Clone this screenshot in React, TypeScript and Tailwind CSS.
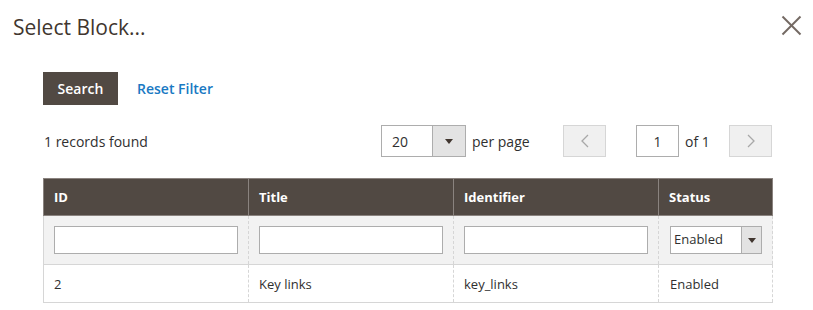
import React from "react";

const Caret = () => (
  <svg width="8" height="5" viewBox="0 0 8 5" className="block">
    <polygon points="0,0 8,0 4,5" fill="#41362f" />
  </svg>
);

export default function App() {
  return (
    <div className="w-[813px] h-[310px] bg-white font-['Open_Sans',sans-serif] text-[#303030] overflow-hidden">
      <div className="flex items-start justify-between pl-[13px] pr-[11px] pt-[12px]">
        <h1 className="text-[21px] leading-[30px] text-[#41362f] font-normal">Select Block...</h1>
        <button className="mt-[3px] w-[21px] h-[21px] flex items-center justify-center">
          <svg width="21" height="21" viewBox="0 0 21 21">
            <line x1="1.5" y1="1.5" x2="19.5" y2="19.5" stroke="#736963" strokeWidth="2" />
            <line x1="19.5" y1="1.5" x2="1.5" y2="19.5" stroke="#736963" strokeWidth="2" />
          </svg>
        </button>
      </div>

      <div className="pl-[43px] pr-[40px]">
        <div className="flex items-center gap-[19px] mt-[30px]">
          <button className="h-[33px] w-[75px] bg-[#514943] text-white text-[14px] font-semibold flex items-center justify-center">
            Search
          </button>
          <a className="text-[14px] font-semibold text-[#1979c3] cursor-pointer">Reset Filter</a>
        </div>

        <div className="flex items-center h-[32px] mt-[20px] text-[14px] whitespace-nowrap">
          <span className="pl-[1px] w-[338px] shrink-0">1 records found</span>
          <div className="shrink-0 flex items-center h-[32px] w-[85px] border border-[#adadad]">
            <span className="flex-1 pl-[10px]">20</span>
            <span className="w-[33px] h-full bg-[#e3e3e3] border-l border-[#adadad] flex items-center justify-center">
              <Caret />
            </span>
          </div>
          <span className="ml-[6px] w-[91px] shrink-0">per page</span>
          <button className="shrink-0 w-[43px] h-[32px] bg-[#f0f0f0] border border-[#d6d6d6] flex items-center justify-center">
            <svg width="8" height="14" viewBox="0 0 8 14">
              <polyline points="7,1 1,7 7,13" fill="none" stroke="#a8a8a8" strokeWidth="1.3" />
            </svg>
          </button>
          <div className="shrink-0 ml-[30px] w-[43px] h-[32px] border border-[#adadad] flex items-center justify-center">1</div>
          <span className="shrink-0 ml-[6px] w-[44px]">of 1</span>
          <button className="shrink-0 w-[43px] h-[32px] bg-[#f0f0f0] border border-[#d6d6d6] flex items-center justify-center">
            <svg width="8" height="14" viewBox="0 0 8 14">
              <polyline points="1,1 7,7 1,13" fill="none" stroke="#a8a8a8" strokeWidth="1.3" />
            </svg>
          </button>
        </div>

        <div className="mt-[21px] w-[730px] text-[13px]">
          <div className="grid grid-cols-[205px_205px_205px_115px] h-[38px] bg-[#514943] border-y border-[#8a837f] text-white font-bold">
            <div className="border-l border-[#8a837f] pl-[10px] pt-[1px] flex items-center">ID</div>
            <div className="border-l border-[#8a837f] pl-[10px] pt-[1px] flex items-center">Title</div>
            <div className="border-l border-[#8a837f] pl-[10px] pt-[1px] flex items-center">Identifier</div>
            <div className="border-x border-[#8a837f] pl-[10px] pt-[1px] flex items-center">Status</div>
          </div>
          <div className="grid grid-cols-[205px_205px_205px_115px] h-[49px] bg-[#f2f2f2] border-b border-[#d6d6d6]">
            <div className="border-l border-[#d6d6d6] px-[10px] flex items-center">
              <input className="w-full h-[28px] bg-white border border-[#adadad] outline-none" />
            </div>
            <div className="border-l border-dashed border-[#d6d6d6] px-[10px] flex items-center">
              <input className="w-full h-[28px] bg-white border border-[#adadad] outline-none" />
            </div>
            <div className="border-l border-dashed border-[#d6d6d6] px-[10px] flex items-center">
              <input className="w-full h-[28px] bg-white border border-[#adadad] outline-none" />
            </div>
            <div className="border-l border-dashed border-[#d6d6d6] border-r pl-[11px] flex items-center">
              <div className="w-[92px] h-[28px] bg-white border border-[#adadad] flex items-center">
                <span className="flex-1 pl-[3px] text-[13px]">Enabled</span>
                <span className="w-[20px] h-full bg-[#e3e3e3] border-l border-[#adadad] flex items-center justify-center">
                  <Caret />
                </span>
              </div>
            </div>
          </div>
          <div className="grid grid-cols-[205px_205px_205px_115px] h-[38px] bg-white border-b border-[#d6d6d6]">
            <div className="border-l border-[#d6d6d6] pl-[10px] pt-[2px] flex items-center">2</div>
            <div className="border-l border-dashed border-[#d6d6d6] pl-[10px] pt-[2px] flex items-center">Key links</div>
            <div className="border-l border-dashed border-[#d6d6d6] pl-[10px] pt-[2px] flex items-center">key_links</div>
            <div className="border-l border-dashed border-[#d6d6d6] border-r pl-[11px] pt-[2px] flex items-center">Enabled</div>
          </div>
        </div>
      </div>
    </div>
  );
}
